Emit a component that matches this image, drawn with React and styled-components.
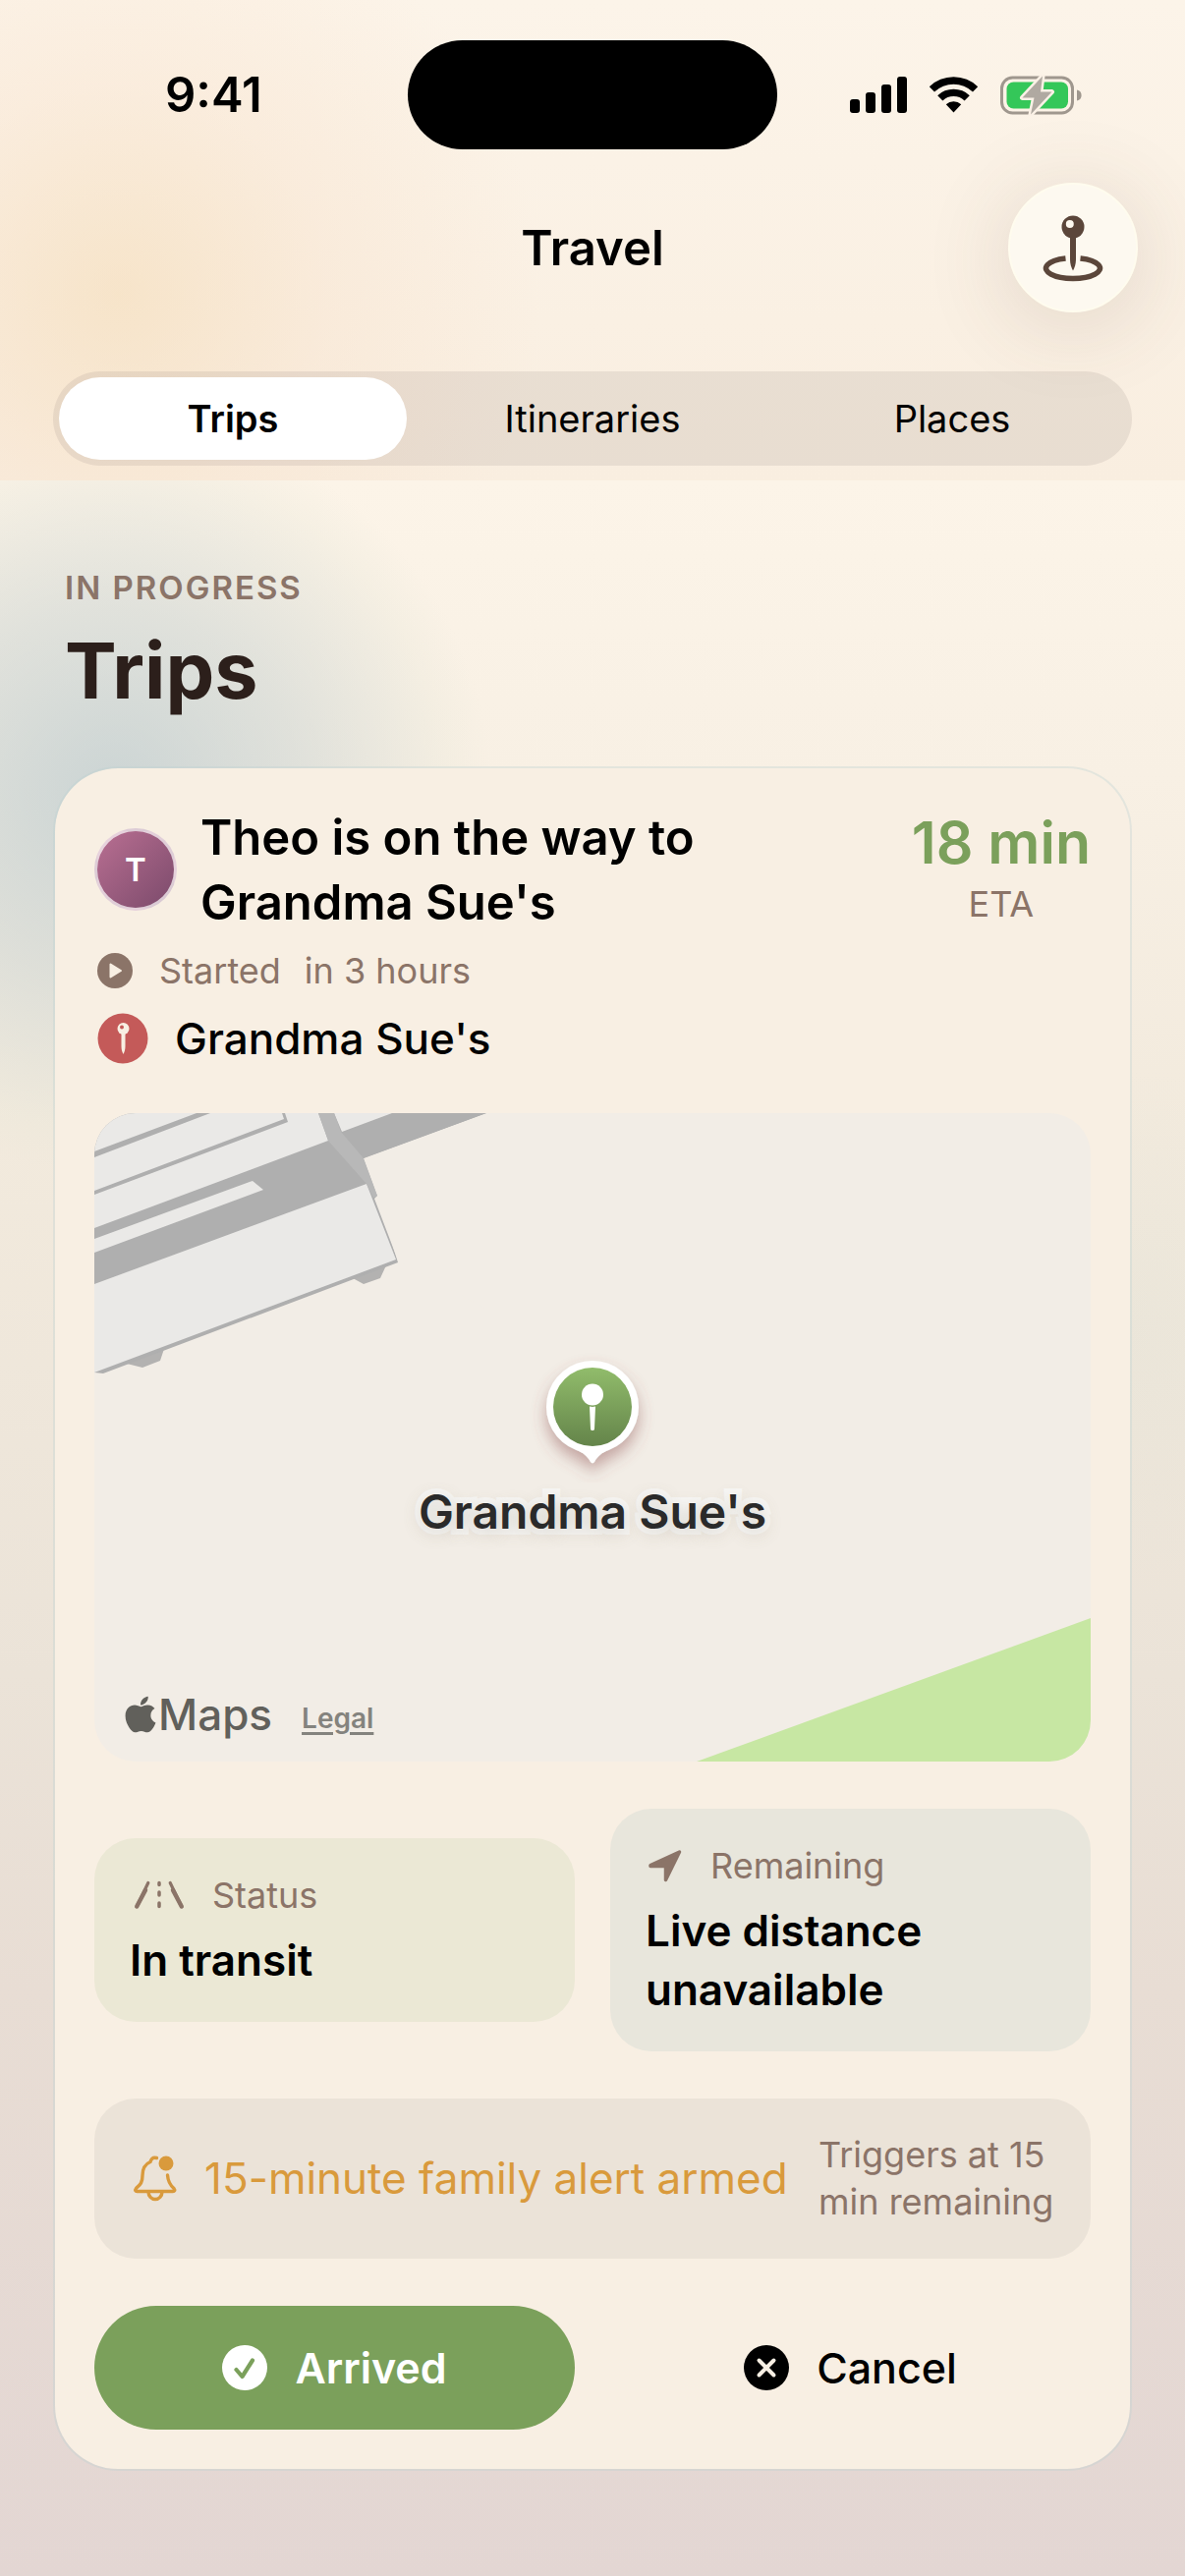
import React, { useState } from "react";
import styled, { createGlobalStyle } from "styled-components";
import { FaApple } from "react-icons/fa";

const GlobalStyle = createGlobalStyle`
  * {
    box-sizing: border-box;
  }
  body {
    margin: 0;
    background: #e3d6d3;
    font-family: Inter, "Liberation Sans", sans-serif;
    color: #000;
  }
  h1, h2, p {
    margin: 0;
  }
  button {
    font-family: inherit;
    border: none;
    cursor: pointer;
  }
`;

const Page = styled.div`
  min-height: 100vh;
  display: flex;
  flex-direction: column;
`;

const Header = styled.header`
  padding: 41px 54px 15px;
  background:
    radial-gradient(circle 430px at 120px 300px, rgba(243, 216, 176, 0.5), rgba(247, 222, 198, 0.3) 50%, rgba(247, 222, 198, 0) 100%),
    linear-gradient(#fcf4e9, #f9eee0);
`;

const StatusBar = styled.div`
  display: grid;
  grid-template-columns: 1fr 376px 1fr;
  align-items: center;
  margin: 0 -54px;
`;

const Clock = styled.time`
  padding-left: 168px;
  font-size: 49px;
  font-weight: 600;
`;

const Island = styled.div`
  height: 111px;
  border-radius: 56px;
  background: #000;
`;

const Indicators = styled.div`
  display: flex;
  align-items: center;
  gap: 22px;
  padding-left: 74px;
`;

const NavBar = styled.div`
  display: grid;
  grid-template-columns: 1fr auto 1fr;
  align-items: center;
  margin: 34px -6px 60px;
`;

const NavTitle = styled.h1`
  grid-column: 2;
  font-size: 49px;
  font-weight: 600;
`;

const RoundButton = styled.button`
  justify-self: end;
  display: flex;
  align-items: center;
  justify-content: center;
  width: 132px;
  height: 132px;
  padding: 0;
  border: 2px solid #fffcee;
  border-radius: 50%;
  background: #fdf9f0;
  box-shadow: 0 12px 90px rgba(91, 70, 58, 0.16);
`;

const Segments = styled.div`
  display: grid;
  grid-template-columns: repeat(3, 1fr);
  gap: 12px;
  height: 96px;
  padding: 6px;
  border-radius: 48px;
  background: rgba(120, 110, 110, 0.13);
`;

const Segment = styled.button`
  border-radius: 42px;
  background: ${(props) => (props.$active ? "#fff" : "transparent")};
  font-size: 38px;
  font-weight: ${(props) => (props.$active ? 600 : 400)};
  color: #000;
`;

const Main = styled.main`
  flex: 1;
  padding: 89px 54px 107px;
  background:
    radial-gradient(circle 385px at 115px 320px, rgba(180, 198, 204, 0.66), rgba(194, 206, 207, 0.45) 50%, rgba(226, 228, 214, 0.22) 88%, rgba(226, 228, 214, 0) 100%),
    radial-gradient(circle 260px at 1140px 860px, rgba(214, 222, 210, 0.2), rgba(214, 222, 210, 0)),
    linear-gradient(#fcf4e8, #f8f0e4 14%, #f2eadd 31%, #ebe3d8 57%, #e8ddd4 72%, #e3d6d3);
`;

const Overline = styled.p`
  padding: 0 12px;
  font-size: 33px;
  line-height: 40px;
  font-weight: 600;
  letter-spacing: 2px;
  text-transform: uppercase;
  color: #8b7468;
`;

const SectionTitle = styled.h2`
  padding: 0 12px;
  margin: 14px 0 48px;
  font-size: 79px;
  line-height: 100px;
  font-weight: 700;
  color: #2c1f1b;
`;

const Card = styled.article`
  padding: 38px 40px 40px;
  border: 2px solid rgba(190, 208, 208, 0.35);
  border-radius: 66px;
  background: #f8efe3;
  background-clip: padding-box;
`;

const CardTop = styled.div`
  display: flex;
  align-items: flex-start;
  gap: 24px;
`;

const Avatar = styled.div`
  flex: none;
  display: flex;
  align-items: center;
  justify-content: center;
  width: 84px;
  height: 84px;
  margin-top: 23px;
  border: 3px solid rgba(255, 255, 255, 0.7);
  border-radius: 50%;
  background: linear-gradient(135deg, #b96f92, #7b4a6b);
  font-size: 33px;
  font-weight: 600;
  color: #fff;
`;

const TripTitle = styled.h2`
  flex: 1;
  font-size: 49px;
  line-height: 66px;
  font-weight: 600;
`;

const Eta = styled.div`
  display: flex;
  flex-direction: column;
  align-items: center;
`;

const EtaValue = styled.strong`
  font-size: 59px;
  line-height: 76px;
  font-weight: 600;
  color: #7ba05b;
`;

const Muted = styled.span`
  font-size: 36px;
  line-height: 48px;
  font-weight: 400;
  color: #8b7468;
`;

const InfoRow = styled.div`
  display: flex;
  align-items: center;
  gap: 24px;
  margin-top: ${(props) => props.$top}px;
  font-size: 44px;
  line-height: 54px;
  font-weight: 500;
`;

const MapBox = styled.div`
  position: relative;
  height: 660px;
  margin: 49px 0 48px;
  border-radius: 42px;
  overflow: hidden;
  background: #f2ede6;
`;

const MapArt = styled.svg`
  display: block;
  width: 100%;
  height: 100%;
`;

const Marker = styled.div`
  position: absolute;
  top: 240px;
  left: 0;
  right: 0;
  display: flex;
  flex-direction: column;
  align-items: center;
`;

const MarkerLabel = styled.span`
  font-size: 48px;
  line-height: 60px;
  font-weight: 600;
  color: #2a2a2a;
  -webkit-text-stroke: 12px #f7f6f4;
  paint-order: stroke fill;
  text-shadow: 0 4px 18px rgba(120, 105, 80, 0.3);
`;

const Attribution = styled.div`
  position: absolute;
  left: 31px;
  bottom: 18px;
  display: flex;
  align-items: center;
  color: #61605b;
`;

const AppleLogo = styled(FaApple)`
  width: 32px;
  height: 42px;
`;

const MapsName = styled.span`
  margin-left: 2px;
  font-size: 44px;
  line-height: 60px;
  font-weight: 500;
`;

const LegalLink = styled.a`
  margin: 8px 0 0 30px;
  font-size: 28px;
  line-height: 36px;
  font-weight: 600;
  color: #84837e;
  text-decoration-thickness: 3px;
  text-underline-offset: 4px;
`;

const Stats = styled.div`
  display: grid;
  grid-template-columns: 1fr 1fr;
  align-items: center;
  gap: 36px;
`;

const Stat = styled.section`
  padding: 34px 36px 33px;
  border-radius: 42px;
  background: ${(props) => props.$tint};
`;

const StatLabel = styled.div`
  display: flex;
  align-items: center;
  gap: 24px;
`;

const StatValue = styled.p`
  margin-top: 12px;
  font-size: 44px;
  line-height: 60px;
  font-weight: 600;
`;

const Alert = styled.div`
  display: flex;
  align-items: center;
  gap: 24px;
  margin: 48px 0;
  padding: 33px 36px 34px;
  border-radius: 42px;
  background: #ebe3d8;
`;

const AlertText = styled.p`
  flex: 1;
  font-size: 44px;
  line-height: 54px;
  white-space: nowrap;
  color: #d99a3c;
`;

const AlertNote = styled(Muted)`
  width: 241px;
  white-space: nowrap;
`;

const Actions = styled.div`
  display: grid;
  grid-template-columns: 1fr 1fr;
  gap: 36px;
`;

const ActionButton = styled.button`
  display: flex;
  align-items: center;
  justify-content: center;
  gap: 28px;
  height: 126px;
  border-radius: 63px;
  font-size: 43px;
  font-weight: ${(props) => (props.$primary ? 600 : 500)};
  color: ${(props) => (props.$primary ? "#fff" : "#000")};
  background: ${(props) => (props.$primary ? "#7ba05b" : "transparent")};
`;

const SignalIcon = () => (
  <svg width="58" height="38" viewBox="0 0 58 38" aria-hidden="true">
    <rect x="0" y="23" width="10" height="14" rx="3" />
    <rect x="16" y="16" width="10" height="21" rx="3" />
    <rect x="32" y="8" width="10" height="29" rx="3" />
    <rect x="48" y="0" width="10" height="37" rx="3" />
  </svg>
);

const WifiIcon = () => (
  <svg width="51" height="38" viewBox="0 0 51 38" aria-hidden="true">
    <path d="M0.8 10.2a35.5 35.5 0 0 1 49.4 0L45 15.6a28 28 0 0 0-39 0z" />
    <path d="M9.2 19.2a23.5 23.5 0 0 1 32.6 0l-5.2 5.4a16 16 0 0 0-22.2 0z" />
    <path d="M17.8 28.2a11.2 11.2 0 0 1 15.4 0l-7.7 8.4z" />
  </svg>
);

const BatteryIcon = () => (
  <svg width="84" height="42" viewBox="0 0 84 42" aria-hidden="true">
    <rect x="1.5" y="3" width="72" height="36" rx="11" fill="none" stroke="#9f978e" strokeWidth="3" />
    <path d="M78 15.5c3.4.8 4.6 3 4.6 5.5s-1.2 4.7-4.6 5.5z" fill="#9f978e" />
    <rect x="6.5" y="7.5" width="62.5" height="27" rx="7" fill="#34c759" />
    <path
      d="M43 1.5L22.5 23.5H34.5L31 40.5L52.5 17.5H41z"
      fill="#b0a9a1"
      stroke="#fbf1e6"
      strokeWidth="5"
      strokeLinejoin="round"
      paintOrder="stroke"
    />
  </svg>
);

const PlacePinIcon = () => (
  <svg width="66" height="72" viewBox="0 0 66 72" aria-hidden="true">
    <path d="M40.5 46.9A27.5 10.5 0 1 1 25.5 46.9" fill="none" stroke="#5b463a" strokeWidth="5.5" />
    <circle cx="33" cy="15" r="11.5" fill="#5b463a" />
    <circle cx="29.8" cy="12" r="4" fill="#fdf9f0" />
    <path d="M30 25h6v23c0 5-1.5 9-3 11.5c-1.5-2.5-3-6.5-3-11.5z" fill="#5b463a" />
  </svg>
);

const PlayIcon = () => (
  <svg width="42" height="42" viewBox="0 0 42 42" aria-hidden="true">
    <circle cx="21" cy="21" r="18" fill="#8b7468" />
    <path d="M16.5 14.5v13L27 21z" fill="#f8efe3" stroke="#f8efe3" strokeWidth="2" strokeLinejoin="round" />
  </svg>
);

const DestinationIcon = () => (
  <svg width="58" height="54" viewBox="0 0 58 54" aria-hidden="true">
    <circle cx="29" cy="27" r="25.5" fill="#c45a59" />
    <circle cx="29.5" cy="17" r="6" fill="#f8efe3" />
    <circle cx="28" cy="15.5" r="2" fill="#c45a59" />
    <path d="M27.5 22h4v13c0 3-.8 6-2 8c-1.2-2-2-5-2-8z" fill="#f8efe3" />
  </svg>
);

const RoadIcon = () => (
  <svg width="60" height="32" viewBox="0 0 60 32" fill="none" stroke="#8b7468" strokeLinecap="round" strokeLinejoin="round" aria-hidden="true">
    <path d="M18.8 3.5L7.5 27M41.2 3.5L52.5 27" strokeWidth="3.2" />
    <path d="M16 11L7.2 27.5M44 11L52.8 27.5" strokeWidth="4.4" />
    <path d="M30 3.5v2M30 13v3M30 24v3.5" strokeWidth="3.5" />
  </svg>
);

const ArrowIcon = () => (
  <svg width="42" height="40" viewBox="0 0 42 40" aria-hidden="true">
    <path d="M5 19.5L34.5 6L20.5 34.5V20.5H5z" fill="#8b7468" stroke="#8b7468" strokeWidth="3.5" strokeLinejoin="round" />
  </svg>
);

const BellIcon = () => (
  <svg width="52" height="52" viewBox="-2 0 52 52" fill="none" stroke="#d99a3c" strokeWidth="3.4" strokeLinecap="round" aria-hidden="true">
    <path d="M25.5 5.5C22 4.5 20 6 19 9.5C13 12 11 16.5 11 23.5C11 31.5 8 33 4.5 36.5C3 38.5 4 39.5 5.5 39.5H42C43.5 39.5 44.5 38.5 43 36.5C39 33 37 30 36.5 23" strokeLinejoin="round" />
    <path d="M17 40a7 7.5 0 0 0 14 0" />
    <circle cx="35" cy="11" r="7.5" fill="#d99a3c" stroke="none" />
  </svg>
);

const CheckIcon = () => (
  <svg width="46" height="46" viewBox="0 0 46 46" fill="none" strokeLinecap="round" strokeLinejoin="round" aria-hidden="true">
    <circle cx="23" cy="23" r="23" fill="#fff" />
    <path d="M14.5 25l6 7L31 15.5" stroke="#7ba05b" strokeWidth="4.2" />
  </svg>
);

const CrossIcon = () => (
  <svg width="46" height="46" viewBox="0 0 46 46" fill="none" strokeLinecap="round" aria-hidden="true">
    <circle cx="23" cy="23" r="23" fill="#000" />
    <path d="M15.5 15.5l15 15M30.5 15.5l-15 15" stroke="#f8efe3" strokeWidth="4" />
  </svg>
);

const MarkerPin = () => (
  <svg width="150" height="136" viewBox="0 0 150 136" aria-hidden="true">
    <defs>
      <linearGradient id="pinFill" x1="0" y1="0" x2="0" y2="1">
        <stop offset="0" stopColor="#91bc6b" />
        <stop offset="1" stopColor="#64844a" />
      </linearGradient>
      <filter id="pinShadow" x="-30%" y="-30%" width="160%" height="160%">
        <feDropShadow dx="0" dy="9" stdDeviation="8" floodColor="#8a4a4a" floodOpacity="0.45" />
      </filter>
    </defs>
    <path
      d="M75 12a47 47 0 0 1 16.5 91c-7 2.6-11 6-14.5 12c-1 1.7-3 1.7-4 0c-3.5-6-7.5-9.4-14.5-12a47 47 0 0 1 16.5-91z"
      fill="#fff"
      filter="url(#pinShadow)"
    />
    <circle cx="75" cy="59" r="40" fill="url(#pinFill)" />
    <circle cx="75" cy="46.5" r="11" fill="#fff" />
    <path d="M72 58.6c2 .6 4 .6 6 0l-1 23c-.2 2-3.8 2-4 0z" fill="#fff" />
  </svg>
);

const MapDrawing = () => (
  <MapArt viewBox="0 0 1014 660" preserveAspectRatio="xMidYMid slice" aria-hidden="true">
    <path d="M33 255L49 259L67 252L71 240zM263 168L274 174L291 168L297 155z" fill="#b3b2b1" />
    <path d="M0 0H399L274 46L288 84L309 152L9 265L0 264z" fill="#afafaf" />
    <path d="M274 46L288 84L285 87L309 150L400 200V0z" fill="#f2ede6" />
    <path d="M399 0H251V27L274 46z" fill="#afafaf" />
    <path d="M0 0H228L238 28L0 117z" fill="#eae9e7" />
    <path d="M0 39L104 0H118L0 45zM0 79L193 6L191 0H194L197 9L0 83z" fill="#afafaf" />
    <path d="M0 128L161 69L172 78L0 142zM0 174L277 72L307 149L0 264zM244 0H303L252 19z" fill="#eae9e7" />
    <path d="M228 0H244L251 19L274 46L288 84L284 86L277 72L238 28z" fill="#b8b8b8" />
    <path d="M613 660L1014 514V660z" fill="#c7e7a3" />
  </MapArt>
);

const tabs = ["Trips", "Itineraries", "Places"];

export default function App() {
  const [tab, setTab] = useState("Trips");

  return (
    <Page>
      <GlobalStyle />
      <Header>
        <StatusBar>
          <Clock>9:41</Clock>
          <Island />
          <Indicators>
            <SignalIcon />
            <WifiIcon />
            <BatteryIcon />
          </Indicators>
        </StatusBar>
        <NavBar>
          <NavTitle>Travel</NavTitle>
          <RoundButton aria-label="Add place">
            <PlacePinIcon />
          </RoundButton>
        </NavBar>
        <Segments role="group" aria-label="Travel sections">
          {tabs.map((name) => (
            <Segment
              key={name}
              $active={tab === name}
              aria-pressed={tab === name}
              onClick={() => setTab(name)}
            >
              {name}
            </Segment>
          ))}
        </Segments>
      </Header>

      <Main>
        <Overline>In progress</Overline>
        <SectionTitle>Trips</SectionTitle>

        <Card>
          <CardTop>
            <Avatar>T</Avatar>
            <TripTitle>Theo is on the way to Grandma Sue's</TripTitle>
            <Eta>
              <EtaValue>18 min</EtaValue>
              <Muted>ETA</Muted>
            </Eta>
          </CardTop>

          <InfoRow $top={12}>
            <PlayIcon />
            <Muted>Started</Muted>
            <Muted>in 3 hours</Muted>
          </InfoRow>
          <InfoRow $top={18}>
            <DestinationIcon />
            <span>Grandma Sue's</span>
          </InfoRow>

          <MapBox>
            <MapDrawing />
            <Marker>
              <MarkerPin />
              <MarkerLabel>Grandma Sue's</MarkerLabel>
            </Marker>
            <Attribution>
              <AppleLogo />
              <MapsName>Maps</MapsName>
              <LegalLink href="#legal">Legal</LegalLink>
            </Attribution>
          </MapBox>

          <Stats>
            <Stat $tint="#ebe8d5">
              <StatLabel>
                <RoadIcon />
                <Muted>Status</Muted>
              </StatLabel>
              <StatValue>In transit</StatValue>
            </Stat>
            <Stat $tint="#e8e6dc">
              <StatLabel>
                <ArrowIcon />
                <Muted>Remaining</Muted>
              </StatLabel>
              <StatValue>Live distance unavailable</StatValue>
            </Stat>
          </Stats>

          <Alert>
            <BellIcon />
            <AlertText>15-minute family alert armed</AlertText>
            <AlertNote>
              Triggers at 15
              <br />
              min remaining
            </AlertNote>
          </Alert>

          <Actions>
            <ActionButton $primary>
              <CheckIcon />
              Arrived
            </ActionButton>
            <ActionButton>
              <CrossIcon />
              Cancel
            </ActionButton>
          </Actions>
        </Card>
      </Main>
    </Page>
  );
}
